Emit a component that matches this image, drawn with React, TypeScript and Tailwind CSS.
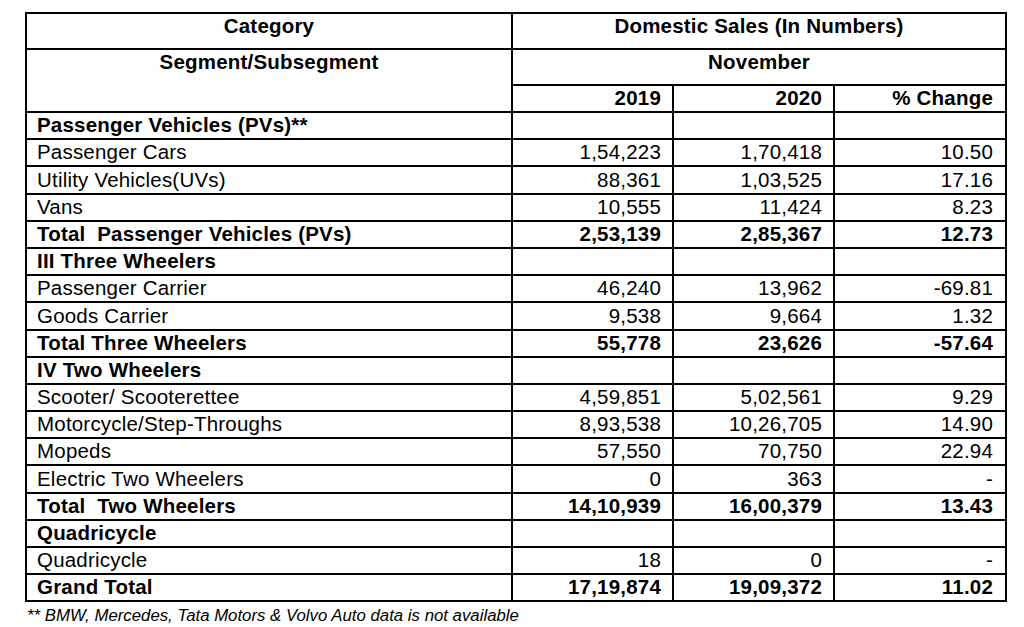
type Row = {
  label: string;
  bold?: boolean;
  y19?: string;
  y20?: string;
  pct?: string;
};

const rows: Row[] = [
  { label: 'Passenger Vehicles (PVs)**', bold: true },
  { label: 'Passenger Cars', y19: '1,54,223', y20: '1,70,418', pct: '10.50' },
  { label: 'Utility Vehicles(UVs)', y19: '88,361', y20: '1,03,525', pct: '17.16' },
  { label: 'Vans', y19: '10,555', y20: '11,424', pct: '8.23' },
  { label: 'Total\u00a0 Passenger Vehicles (PVs)', bold: true, y19: '2,53,139', y20: '2,85,367', pct: '12.73' },
  { label: 'III Three Wheelers', bold: true },
  { label: 'Passenger Carrier', y19: '46,240', y20: '13,962', pct: '-69.81' },
  { label: 'Goods Carrier', y19: '9,538', y20: '9,664', pct: '1.32' },
  { label: 'Total Three Wheelers', bold: true, y19: '55,778', y20: '23,626', pct: '-57.64' },
  { label: 'IV Two Wheelers', bold: true },
  { label: 'Scooter/ Scooterettee', y19: '4,59,851', y20: '5,02,561', pct: '9.29' },
  { label: 'Motorcycle/Step-Throughs', y19: '8,93,538', y20: '10,26,705', pct: '14.90' },
  { label: 'Mopeds', y19: '57,550', y20: '70,750', pct: '22.94' },
  { label: 'Electric Two Wheelers', y19: '0', y20: '363', pct: '-' },
  { label: 'Total\u00a0 Two Wheelers', bold: true, y19: '14,10,939', y20: '16,00,379', pct: '13.43' },
  { label: 'Quadricycle', bold: true },
  { label: 'Quadricycle', y19: '18', y20: '0', pct: '-' },
  { label: 'Grand Total', bold: true, y19: '17,19,874', y20: '19,09,372', pct: '11.02' },
];

export default function App() {
  return (
    <main
      className="w-[1024px] h-[627px] bg-white text-black overflow-hidden"
      style={{ fontFamily: '"Liberation Sans", Arial, sans-serif' }}
    >
      <div className="ml-[25px] pt-[12px] w-[982px]">
        <div className="grid grid-cols-[484px_159px_159px_170px] grid-rows-[34px_34px_25px_repeat(18,25.2px)] gap-[2px] p-[2px] bg-black text-[20.5px] tracking-[0.2px]">
          {/* header */}
          <div className="bg-white font-bold text-center leading-[24px]">Category</div>
          <div className="col-span-3 bg-white font-bold text-center leading-[24px]">
            Domestic Sales (In Numbers)
          </div>
          <div className="row-span-2 bg-white font-bold text-center leading-[24px]">
            Segment/Subsegment
          </div>
          <div className="col-span-3 bg-white font-bold text-center leading-[24px]">November</div>
          <div className="bg-white font-bold text-right pr-[11px] leading-[24px]">2019</div>
          <div className="bg-white font-bold text-right pr-[11px] leading-[24px]">2020</div>
          <div className="bg-white font-bold text-right pr-[12px] leading-[24px]">% Change</div>

          {rows.map((r, i) => {
            const weight = r.bold ? 'font-bold' : 'font-normal';
            return [
              <div key={`l${i}`} className={`bg-white flex items-center pl-[10px] whitespace-pre ${weight}`}>
                {r.label}
              </div>,
              <div key={`a${i}`} className={`bg-white flex items-center justify-end pr-[11px] ${weight}`}>
                {r.y19}
              </div>,
              <div key={`b${i}`} className={`bg-white flex items-center justify-end pr-[11px] ${weight}`}>
                {r.y20}
              </div>,
              <div key={`c${i}`} className={`bg-white flex items-center justify-end pr-[12px] ${weight}`}>
                {r.pct}
              </div>,
            ];
          })}
        </div>
        <p className="mt-[4px] ml-[2px] text-[16.8px] italic leading-[20px]">
          ** BMW, Mercedes, Tata Motors &amp; Volvo Auto data is not available
        </p>
      </div>
    </main>
  );
}
